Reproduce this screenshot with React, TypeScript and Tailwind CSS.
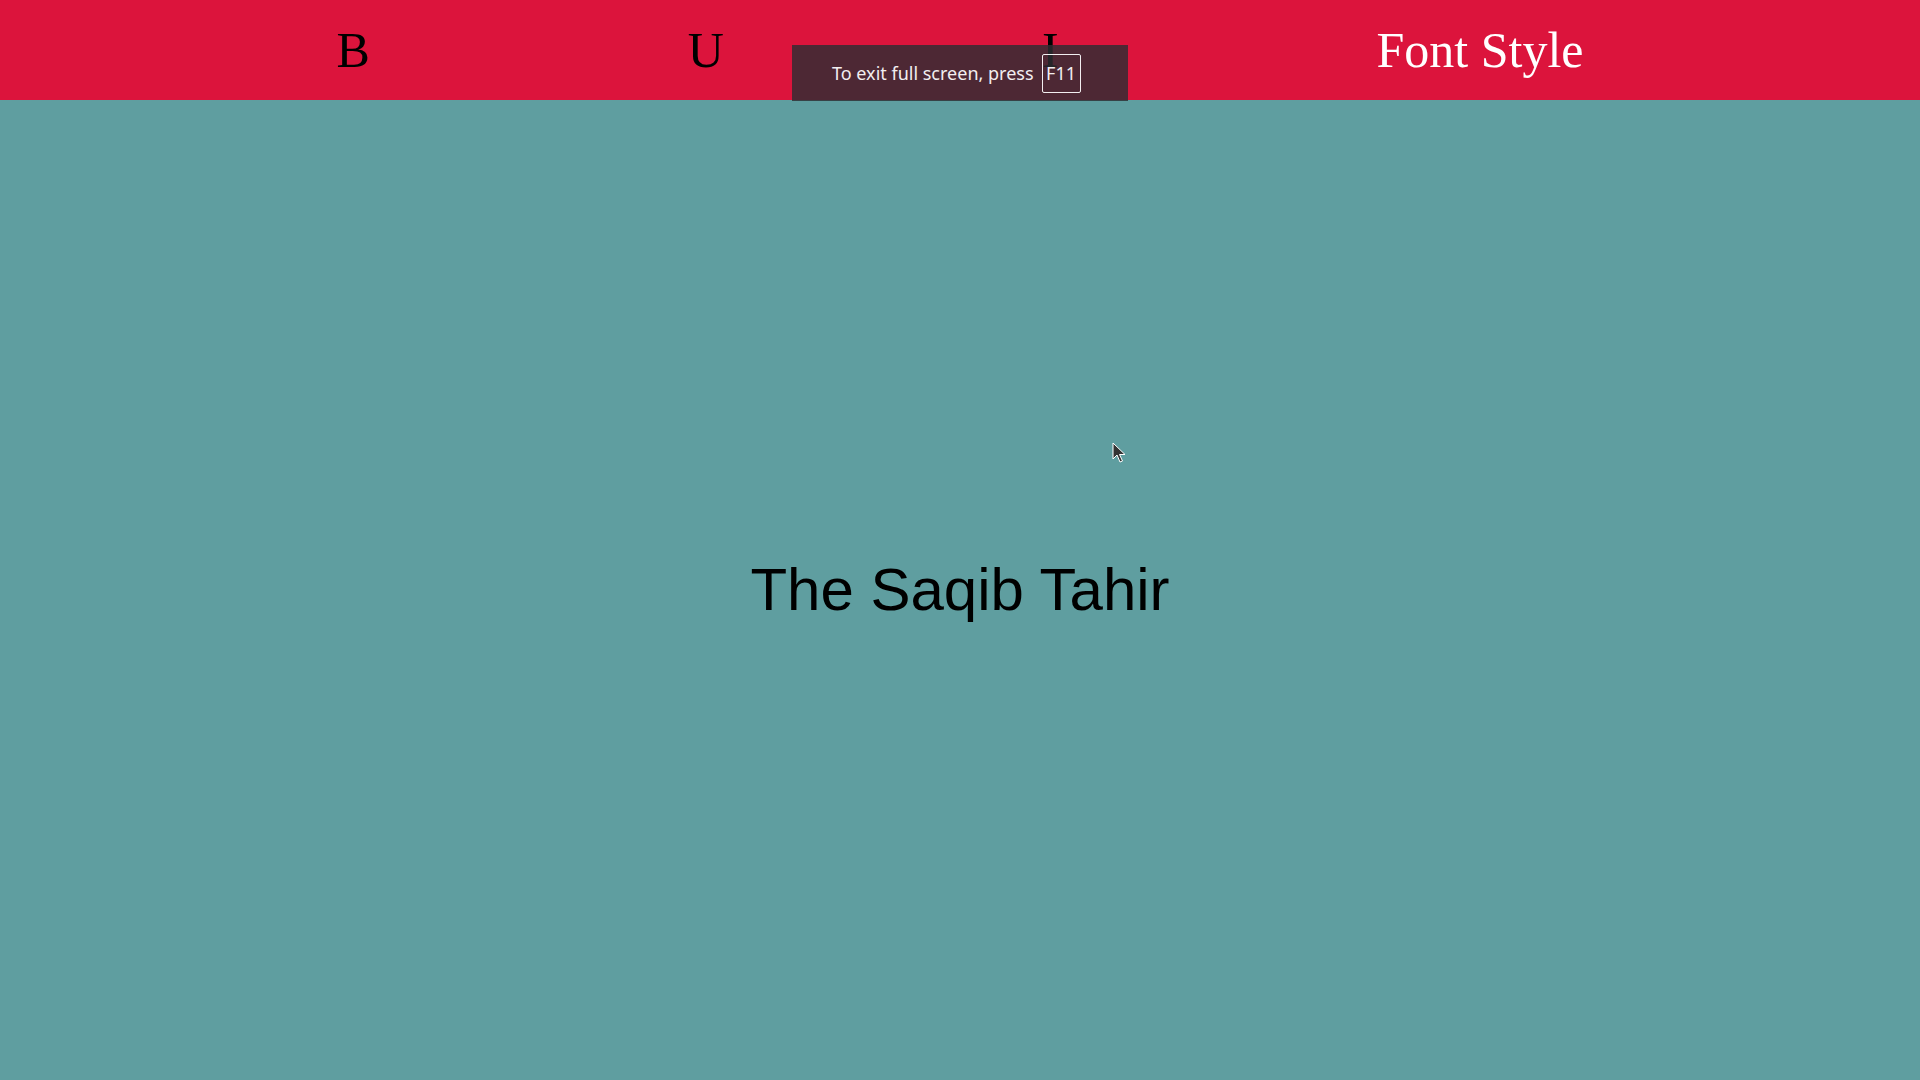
export default function App() {
  return (
    <div className="relative flex min-h-screen flex-col bg-[#5f9ea0]">
      <header className="flex h-[100px] items-center justify-center gap-[318px] bg-[#dc143c] font-['Liberation_Serif',serif] text-[50px] text-black">
        <span>B</span>
        <span>U</span>
        <span>I</span>
        <span className="text-white">Font Style</span>
      </header>

      <main className="flex flex-1 items-center justify-center">
        <h1 className="font-['Liberation_Sans',Arial,sans-serif] text-[60px] text-black">The Saqib Tahir</h1>
      </main>

      {/* browser full screen notice */}
      <div className="absolute left-1/2 top-[45px] flex h-[56px] w-[336px] -translate-x-1/2 items-center gap-[8px] bg-[rgba(45,45,50,0.82)] pl-[40px] font-['Noto_Sans',sans-serif] text-[18px] text-[#f2eef0]">
        <span>To exit full screen, press</span>
        <span className="flex h-[39px] w-[39px] items-center justify-center rounded-[2px] border border-[#f2eef0]">F11</span>
      </div>

      {/* mouse pointer */}
      <svg className="absolute left-[1112px] top-[442px]" width="14" height="22" viewBox="0 0 14 22">
        <path d="M1 1 L1 17 L5 13 L8 20 L10.5 19 L7.5 12.5 L13 12.5 Z" fill="#333" stroke="#fff" strokeWidth="1" strokeLinejoin="round" />
      </svg>
    </div>
  );
}
